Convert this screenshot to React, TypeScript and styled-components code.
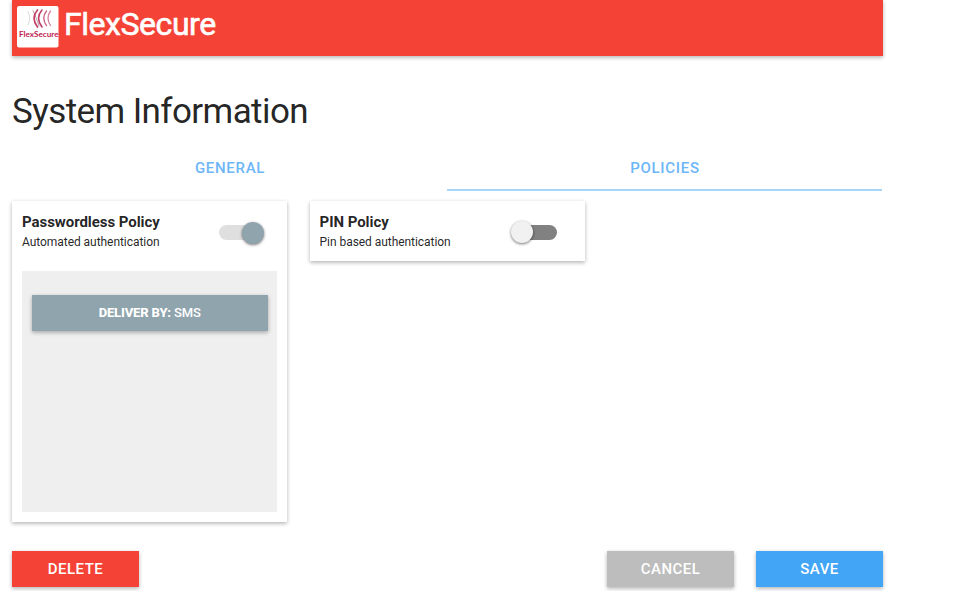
import React from "react";
import styled, { createGlobalStyle } from "styled-components";

const GlobalStyle = createGlobalStyle`
  html, body { margin: 0; background: #fff; overflow: hidden; }
  *, *::before, *::after { box-sizing: border-box; }
  body { font-family: Roboto, sans-serif; color: rgba(0, 0, 0, 0.87); }
`;

const raised = "0 2px 4px rgba(0, 0, 0, 0.18), 0 1px 4px rgba(0, 0, 0, 0.14)";

const Page = styled.main`
  width: 871px;
  height: 591px;
  margin-left: 12px;
  display: flex;
  flex-direction: column;
`;

const Header = styled.header`
  flex: none;
  height: 56.4px;
  padding: 6px 5px 0;
  display: flex;
  gap: 5px;
  background: #f44336;
  box-shadow: ${raised};
`;

const Logo = styled.svg`
  width: 42px;
  height: 42px;
  display: block;
`;

const Brand = styled.span`
  font-size: 32px;
  line-height: 36px;
  font-weight: 400;
  letter-spacing: -0.45px;
  -webkit-text-stroke: 0.6px #fff;
  color: #fff;
  white-space: nowrap;
`;

const Title = styled.h1`
  margin: 33.6px 0 0;
  height: 44px;
  font-size: 35px;
  line-height: 43px;
  font-weight: 400;
  letter-spacing: -0.59px;
  white-space: nowrap;
`;

const Tabs = styled.nav`
  width: 870px;
  height: 48px;
  margin-top: 9px;
  display: grid;
  grid-template-columns: 1fr 1fr;
`;

const Tab = styled.button<{ $active?: boolean }>`
  padding: 4px 0 0 1px;
  border: 0;
  border-bottom: 2px solid ${(p) => (p.$active ? "#a6d6fa" : "transparent")};
  background: none;
  color: #6db6f8;
  font: 500 15px/42px Roboto, sans-serif;
  letter-spacing: 0.7px;
`;

const Policies = styled.section`
  margin-top: 10px;
  height: 350px;
  display: flex;
  align-items: flex-start;
  gap: 22.2px;
`;

const Card = styled.article<{ $height: number }>`
  width: 275.4px;
  height: ${(p) => p.$height}px;
  padding: 0 10px 10px;
  display: flex;
  flex-direction: column;
  background: #fff;
  box-shadow: ${raised};
`;

const CardHead = styled.div`
  height: 60px;
  padding-top: 11px;
  display: flex;
  justify-content: space-between;
`;

const CardTitle = styled.h2`
  margin: 0;
  font-size: 15px;
  line-height: 20px;
  font-weight: 700;
  letter-spacing: -0.06px;
  white-space: nowrap;
`;

const CardText = styled.p`
  margin: 0;
  font-size: 12px;
  line-height: 20px;
  letter-spacing: -0.05px;
  white-space: nowrap;
`;

const Track = styled.span<{ $on: boolean }>`
  width: 40px;
  height: 15px;
  margin: 13px 18px 0 0;
  display: flex;
  align-items: center;
  justify-content: ${(p) => (p.$on ? "flex-end" : "flex-start")};
  border-radius: 8px;
  background: ${(p) => (p.$on ? "#dfdfdf" : "#818181")};
`;

const Knob = styled.span<{ $on: boolean }>`
  flex: none;
  width: 22px;
  height: 22px;
  margin: ${(p) => (p.$on ? "1px -5px 0 0" : "0 0 0 -5.5px")};
  border-radius: 50%;
  background: ${(p) => (p.$on ? "#90a4ae" : "#f1f1f1")};
  box-shadow: 0 1px 3px rgba(0, 0, 0, 0.55);
`;

const Options = styled.div`
  flex: 1;
  margin-top: 10px;
  padding: 24px 9.5px;
  background: #efefef;
`;

const Button = styled.button<{ $color: string }>`
  width: 127px;
  height: 36px;
  padding: 0;
  border: 0;
  background: ${(p) => p.$color};
  color: #fff;
  font: 500 15px/36px Roboto, sans-serif;
  letter-spacing: 0.45px;
  box-shadow: ${raised};
`;

const DeliveryButton = styled(Button)`
  display: block;
  width: 100%;
  font-size: 13px;
  letter-spacing: -0.15px;

  b {
    font-weight: 800;
  }
`;

const Actions = styled.footer`
  display: flex;
  gap: 22px;
`;

const Spacer = styled.div`
  flex: 1;
`;

function Switch({ on }: { on: boolean }) {
  return (
    <Track $on={on} role="switch" aria-checked={on}>
      <Knob $on={on} />
    </Track>
  );
}

interface PolicyProps {
  title: string;
  text: string;
  on: boolean;
  height: number;
  children?: React.ReactNode;
}

function Policy({ title, text, on, height, children }: PolicyProps) {
  return (
    <Card $height={height}>
      <CardHead>
        <div>
          <CardTitle>{title}</CardTitle>
          <CardText>{text}</CardText>
        </div>
        <Switch on={on} />
      </CardHead>
      {children}
    </Card>
  );
}

export default function App() {
  return (
    <>
      <GlobalStyle />
      <Page>
        <Header>
          <Logo viewBox="0 0 42 42">
            <rect width="41.5" height="41.5" rx="2" fill="#fff" />
            <g fill="none" strokeLinecap="round">
              <path d="M11 5.5Q14.5 12 11 19" stroke="#dcd8db" strokeWidth="1" />
              <path d="M16 4.5Q19.5 12 22 20" stroke="#b9a9b2" strokeWidth="1" />
              <path d="M20.5 4Q13.5 12 20.5 21" stroke="#c6406a" strokeWidth="1.7" />
              <path d="M25 4Q18 12 25 21" stroke="#bf4165" strokeWidth="1.6" />
              <path d="M29.5 5Q24 12 29.5 19.5" stroke="#cd6888" strokeWidth="1.4" />
              <path d="M33.5 5Q28.5 12 33.5 19.5" stroke="#d983a0" strokeWidth="1.3" />
            </g>
            <text x="2" y="31.3" textLength="39.5" lengthAdjust="spacingAndGlyphs" fontFamily="Lato, sans-serif" fontWeight="700" fontSize="8" fill="#c02050">
              FlexSecure
            </text>
          </Logo>
          <Brand>FlexSecure</Brand>
        </Header>
        <Title>System Information</Title>
        <Tabs>
          <Tab>GENERAL</Tab>
          <Tab $active>POLICIES</Tab>
        </Tabs>
        <Policies>
          <Policy title="Passwordless Policy" text="Automated authentication" on height={321}>
            <Options>
              <DeliveryButton $color="#90a4ae">
                <b>DELIVER BY:</b> SMS
              </DeliveryButton>
            </Options>
          </Policy>
          <Policy title="PIN Policy" text="Pin based authentication" on={false} height={60} />
        </Policies>
        <Actions>
          <Button $color="#f44336">DELETE</Button>
          <Spacer />
          <Button $color="#bdbdbd">CANCEL</Button>
          <Button $color="#42a5f5">SAVE</Button>
        </Actions>
      </Page>
    </>
  );
}
